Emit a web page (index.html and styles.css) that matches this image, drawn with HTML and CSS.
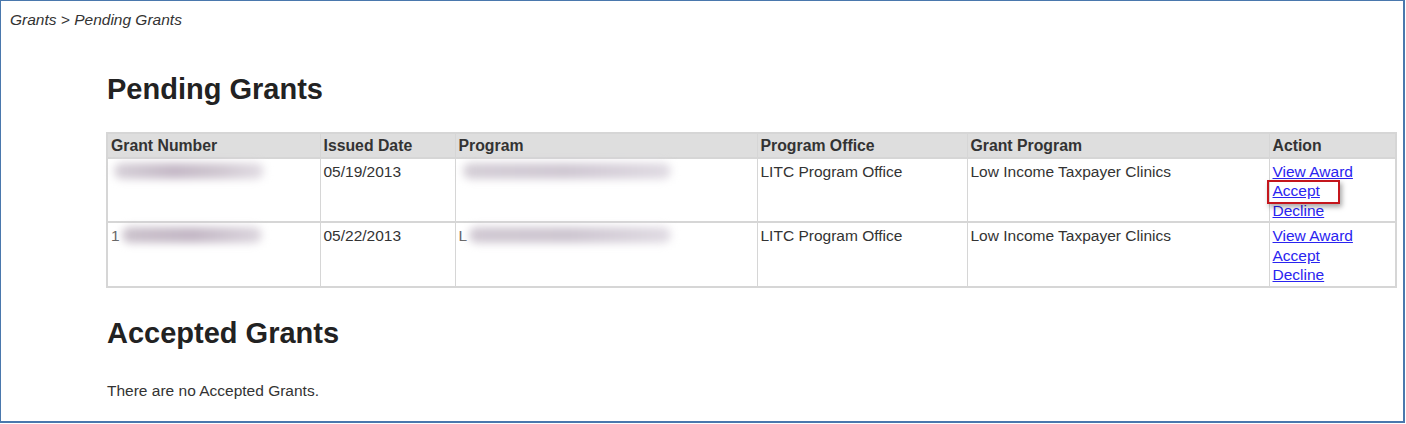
FILE: index.html
```html
<!DOCTYPE html>
<html>
<head>
<meta charset="utf-8">
<link rel="stylesheet" href="styles.css">
</head>
<body>
<div class="frame">
  <div class="crumb">Grants &gt; Pending Grants</div>
  <div class="content">
    <h1>Pending Grants</h1>
    <table class="grants">
      <colgroup>
        <col style="width:213px"><col style="width:135px"><col style="width:302px"><col style="width:210px"><col style="width:302px"><col style="width:127px">
      </colgroup>
      <thead>
        <tr><th>Grant Number</th><th>Issued Date</th><th>Program</th><th>Program Office</th><th>Grant Program</th><th>Action</th></tr>
      </thead>
      <tbody>
        <tr>
          <td><span class="blur num"></span></td>
          <td>05/19/2013</td>
          <td><span class="blur prog"></span></td>
          <td>LITC Program Office</td>
          <td>Low Income Taxpayer Clinics</td>
          <td class="actions"><a href="#">View Award</a><span class="hl"><a href="#">Accept</a></span><a href="#">Decline</a></td>
        </tr>
        <tr>
          <td><span class="lead">1</span><span class="blur num2"></span></td>
          <td>05/22/2013</td>
          <td><span class="lead">L</span><span class="blur prog2"></span></td>
          <td>LITC Program Office</td>
          <td>Low Income Taxpayer Clinics</td>
          <td class="actions"><a href="#">View Award</a><a href="#">Accept</a><a href="#">Decline</a></td>
        </tr>
      </tbody>
    </table>
    <h1 class="second">Accepted Grants</h1>
    <p class="empty">There are no Accepted Grants.</p>
  </div>
</div>
</body>
</html>
```
FILE: styles.css
```css
html, body { margin: 0; padding: 0; background: #fff; }
body { font-family: "Liberation Sans", Arial, sans-serif; color: #333; font-size: 15.5px; }
.frame {
  width: 1405px; height: 423px; box-sizing: border-box;
  border: 2px solid #4a78ad; border-top-width: 1px; border-left-width: 1px;
}
.crumb { font-style: italic; color: #333; padding: 10px 0 0 9px; line-height: 18px; }
.content { padding-left: 105px; }
h1 { font-size: 29px; font-weight: bold; color: #222; margin: 43px 0 0 1px; line-height: 34px; }
.grants {
  margin-top: 26px; border-collapse: collapse; table-layout: fixed; width: 1289px;
  border: 2px solid #d6d6d6;
}
.grants th, .grants td { border: 1px solid #d6d6d6; border-width: 2px 1px; text-align: left; vertical-align: top; padding: 3px 3px 1px 3px; line-height: 19.5px; }
.grants th { background: #dedede; font-weight: bold; color: #333; font-size: 15.8px; padding: 2px 3px 1px 3px; height: 19px; }
.actions a { display: block; color: #2a24f0; text-decoration: underline; width: max-content; }
.hl { display: block; width: max-content; position: relative; }
.hl::after {
  content: ""; position: absolute; left: -6px; top: -1px; width: 69px; height: 20px;
  border: 2px solid #c4161c; box-shadow: 2px 3px 5px rgba(0,0,0,0.35);
}
.blur { display: inline-block; height: 16px; vertical-align: middle; border-radius: 8px; filter: blur(4px); margin-top: -3px; }
.num { width: 150px; margin-left: 3px; background: linear-gradient(90deg, #d6d0d8, #c4b8c6 40%, #cfc6d0 70%, #e2dde4); }
.prog { width: 208px; margin-left: 4px; background: linear-gradient(90deg, #d4ced6, #cfc7d2 50%, #e0dbe3); }
.lead { color: #666; }
.num2 { width: 140px; margin-left: 2px; background: linear-gradient(90deg, #cbc2cc, #c2b6c4 50%, #dcd6de); }
.prog2 { width: 202px; margin-left: 2px; background: linear-gradient(90deg, #d0c8d2, #cdc5d0 50%, #e0dbe3); }
h1.second { margin-top: 28px; margin-left: 1px; }
.empty { margin: 32px 0 0 1px; line-height: 18px; }
```
